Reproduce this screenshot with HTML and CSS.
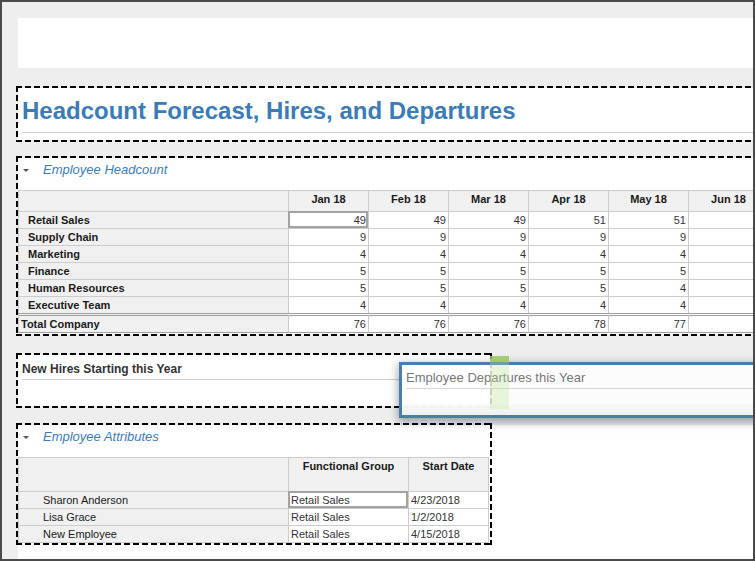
FILE: index.html
```html
<!DOCTYPE html>
<html lang="en">
<head>
<meta charset="utf-8">
<title>Headcount Forecast, Hires, and Departures</title>
<link rel="stylesheet" href="styles.css">
</head>
<body>
<div class="frame">
  <div class="topbar"></div>

  <section class="widget dash title-widget">
    <h1 class="page-title">Headcount Forecast, Hires, and Departures</h1>
  </section>

  <section class="widget dash headcount">
    <div class="sec-head"><span class="caret"></span><span class="sec-title">Employee Headcount</span></div>
    <div class="grid hc-grid">
      <div class="c hdr lbl"></div>
      <div class="c hdr">Jan 18</div>
      <div class="c hdr">Feb 18</div>
      <div class="c hdr">Mar 18</div>
      <div class="c hdr">Apr 18</div>
      <div class="c hdr">May 18</div>
      <div class="c hdr">Jun 18</div>

      <div class="c lbl rowlbl">Retail Sales</div>
      <div class="c num sel">49</div><div class="c num">49</div><div class="c num">49</div><div class="c num">51</div><div class="c num">51</div><div class="c num"></div>

      <div class="c lbl rowlbl">Supply Chain</div>
      <div class="c num">9</div><div class="c num">9</div><div class="c num">9</div><div class="c num">9</div><div class="c num">9</div><div class="c num"></div>

      <div class="c lbl rowlbl">Marketing</div>
      <div class="c num">4</div><div class="c num">4</div><div class="c num">4</div><div class="c num">4</div><div class="c num">4</div><div class="c num"></div>

      <div class="c lbl rowlbl">Finance</div>
      <div class="c num">5</div><div class="c num">5</div><div class="c num">5</div><div class="c num">5</div><div class="c num">5</div><div class="c num"></div>

      <div class="c lbl rowlbl">Human Resources</div>
      <div class="c num">5</div><div class="c num">5</div><div class="c num">5</div><div class="c num">5</div><div class="c num">4</div><div class="c num"></div>

      <div class="c lbl rowlbl">Executive Team</div>
      <div class="c num">4</div><div class="c num">4</div><div class="c num">4</div><div class="c num">4</div><div class="c num">4</div><div class="c num"></div>

      <div class="c lbl total totlbl">Total Company</div>
      <div class="c num total">76</div><div class="c num total">76</div><div class="c num total">76</div><div class="c num total">78</div><div class="c num total">77</div><div class="c num total"></div>
    </div>
  </section>

  <section class="widget dash newhires">
    <div class="card-title">New Hires Starting this Year</div>
  </section>

  <div class="lastrow">
    <section class="widget dash attributes">
      <div class="sec-head"><span class="caret"></span><span class="sec-title">Employee Attributes</span></div>
      <div class="grid at-grid">
        <div class="c hdr lbl"></div>
        <div class="c hdr tall">Functional Group</div>
        <div class="c hdr tall last">Start Date</div>

        <div class="c lbl name">Sharon Anderson</div>
        <div class="c val sel">Retail Sales</div>
        <div class="c val last">4/23/2018</div>

        <div class="c lbl name">Lisa Grace</div>
        <div class="c val">Retail Sales</div>
        <div class="c val last">1/2/2018</div>

        <div class="c lbl name bottom">New Employee</div>
        <div class="c val bottom">Retail Sales</div>
        <div class="c val last bottom">4/15/2018</div>
      </div>
    </section>
  </div>

  <div class="drag-panel">
    <div class="drag-title">Employee Departures this Year</div>
    <div class="drag-body"></div>
  </div>
  <div class="drop-indicator"></div>
</div>
</body>
</html>
```

FILE: styles.css
```css
html, body {
  margin: 0;
  padding: 0;
  overflow: hidden;
}

body {
  font-family: "Liberation Sans", Arial, sans-serif;
  color: #222;
}

.frame {
  position: relative;
  width: 755px;
  height: 561px;
  box-sizing: border-box;
  border: 2px solid #4a4a4a;
  background: #eeeeee;
  padding: 16px 0 0 16px;
  overflow: hidden;
  display: flex;
  flex-direction: column;
}

.topbar {
  height: 50px;
  flex-shrink: 0;
  background: #fff;
}

.widget {
  background: #fff;
  flex-shrink: 0;
  box-sizing: border-box;
}

.dash {
  position: relative;
}

.dash::after {
  content: "";
  position: absolute;
  top: -2px;
  left: -2px;
  right: -2px;
  bottom: -2px;
  pointer-events: none;
  background:
    repeating-linear-gradient(90deg, #000 0 6px, transparent 6px 9px) top left / 100% 2px no-repeat,
    repeating-linear-gradient(90deg, #000 0 6px, transparent 6px 9px) bottom left / 100% 2px no-repeat,
    repeating-linear-gradient(180deg, #000 0 6px, transparent 6px 9px) top left / 2px 100% no-repeat,
    repeating-linear-gradient(180deg, #000 0 6px, transparent 6px 9px) top right / 2px 100% no-repeat;
}

/* Title */
.title-widget {
  margin-top: 20px;
  height: 52px;
}

.page-title {
  margin: 0 0 0 4px;
  padding: 9px 0 7px;
  font-size: 24px;
  line-height: 28px;
  font-weight: 700;
  color: #3a7bb8;
  border-bottom: 1px solid #cfcfcf;
  white-space: nowrap;
}

/* Section headers */
.sec-head {
  height: 32px;
  box-sizing: border-box;
  padding: 4px 0 0 5px;
  display: flex;
  align-items: flex-start;
  line-height: 16px;
}

.caret {
  width: 0;
  height: 0;
  margin-top: 7px;
  border-left: 3px solid transparent;
  border-right: 3px solid transparent;
  border-top: 3px solid #555;
}

.sec-title {
  margin-left: 14px;
  font-size: 13px;
  font-style: italic;
  color: #3a7bb8;
}

/* Grids */
.grid {
  display: grid;
  font-size: 11px;
}

.c {
  box-sizing: border-box;
  border-top: 1px solid #cccccc;
  border-left: 1px solid #cccccc;
  line-height: 16px;
  white-space: nowrap;
  overflow: hidden;
  background: #fff;
  color: #333;
}

.c.lbl {
  background: #f0f0f0;
}

.c.hdr {
  background: #f0f0f0;
  font-weight: 700;
  text-align: center;
  line-height: 17px;
  color: #1a1a1a;
}

.c.num {
  text-align: right;
  padding-right: 2px;
}

.c.sel {
  outline: 2px solid #a3a3a3;
  outline-offset: -2px;
}

.headcount {
  margin-top: 18px;
  height: 176px;
}

.hc-grid {
  grid-template-columns: 270px repeat(6, 80px);
  grid-template-rows: 21px repeat(6, 17px) 20px;
  width: 750px;
}

.rowlbl {
  font-weight: 700;
  padding-left: 9px;
  color: #1a1a1a;
}

.c.total {
  border-top: 3px double #a0a0a0;
  border-bottom: 1px solid #a0a0a0;
}

.totlbl {
  font-weight: 700;
  padding-left: 2px;
  color: #1a1a1a;
}

/* New hires */
.newhires {
  margin-top: 21px;
  height: 51px;
  width: 472px;
}

.card-title {
  margin: 0 4px;
  padding: 7px 0 3px;
  font-size: 12px;
  line-height: 14px;
  font-weight: 700;
  color: #333;
  border-bottom: 1px solid #cccccc;
}

/* Last row */
.lastrow {
  margin-top: 19px;
  flex: 1;
  background: #fff;
}

.attributes {
  width: 472px;
  height: 118px;
}

.at-grid {
  grid-template-columns: 270px 120px 81px;
  grid-template-rows: 34px 17px 17px 18px;
  width: 471px;
}

.c.tall {
  line-height: 16px;
}

.c.last {
  border-right: 1px solid #cccccc;
}

.c.bottom {
  border-bottom: 1px solid #cccccc;
}

.name {
  padding-left: 24px;
  color: #1a1a1a;
}

.val {
  padding-left: 2px;
  color: #333;
}

/* Dragged panel overlay */
.drag-panel {
  position: absolute;
  left: 397px;
  top: 360px;
  width: 420px;
  height: 56px;
  box-sizing: border-box;
  border: 3px solid #4a7dab;
  background: rgba(255, 255, 255, 0.8);
  box-shadow: 0 3px 9px 1px rgba(0, 0, 0, 0.35);
  display: flex;
  flex-direction: column;
}

.drag-title {
  margin-left: 4px;
  padding: 5px 0 3px;
  font-size: 13px;
  line-height: 15px;
  color: #777;
  border-bottom: 1px solid #d5d5d5;
  white-space: nowrap;
}

.drag-body {
  flex: 1;
  background: linear-gradient(rgba(255, 255, 255, 0) 0 15px, rgba(248, 248, 248, 0.9) 15px, rgba(238, 238, 238, 0.9) 100%);
}

.drop-indicator {
  position: absolute;
  left: 488px;
  top: 354px;
  width: 19px;
  height: 53px;
  background: linear-gradient(rgba(150, 200, 95, 0.85) 0 6px, rgba(190, 228, 150, 0.32) 6px);
}
```
